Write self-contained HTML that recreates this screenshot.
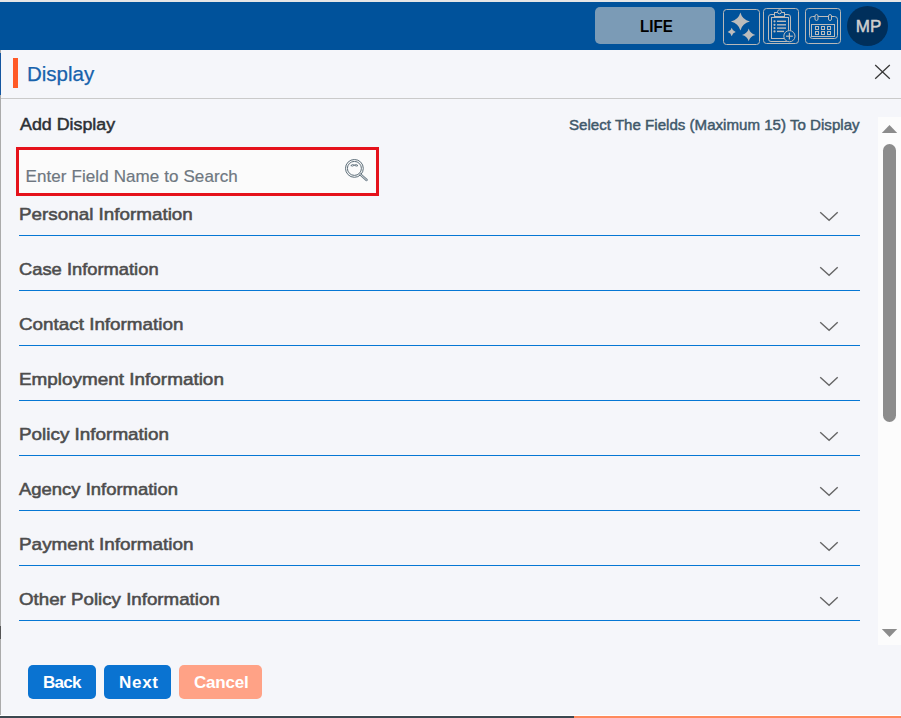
<!DOCTYPE html>
<html><head><meta charset="utf-8">
<style>
html,body{margin:0;padding:0;}
body{width:901px;height:718px;overflow:hidden;position:relative;background:#f5f6fa;font-family:"Liberation Sans",sans-serif;}
.a{position:absolute;}
.t{position:absolute;white-space:nowrap;}
#top{left:0;top:0;width:901px;height:2px;background:#e6e6e6;}
#hdr{left:0;top:2px;width:901px;height:48px;background:#00529b;}
#life{left:595px;top:7px;width:120px;height:37px;border-radius:5px;background:#7b9bb6;}
.ib{position:absolute;box-sizing:border-box;border:1px solid #b8b8b8;border-radius:4px;}
#av{left:847px;top:6px;width:41px;height:40px;border-radius:50%;background:#002f5b;}
#strip{left:0;top:50px;width:1px;height:666px;background:#ababab;}
#modal{left:1px;top:50px;width:900px;height:665px;background:#f5f6fa;border-radius:4px 4px 0 0;}
#bar{left:13px;top:58px;width:5px;height:30px;background:#ff5a27;}
#div1{left:1px;top:98px;width:900px;height:1px;background:#cacaca;}
#search{left:16px;top:147px;width:363px;height:49px;box-sizing:border-box;border:3px solid #e5121b;background:#fbfbfb;}
.line{position:absolute;left:19px;width:841px;height:1px;background:#0677d4;}
.lbl{position:absolute;left:19px;font-size:17px;line-height:17px;color:#4d4d4d;-webkit-text-stroke:0.55px #4d4d4d;transform-origin:0 0;}
.btn{position:absolute;top:665px;height:34px;border-radius:5px;background:#0a73d1;color:#fff;font-weight:bold;font-size:17px;line-height:34px;text-align:center;}
#track{left:878px;top:117px;width:23px;height:528px;background:#fcfcfc;}
#thumb{left:883px;top:144px;width:13px;height:278px;border-radius:7px;background:#8c8c8c;}
</style></head>
<body>
<div id="top" class="a"></div>
<div id="hdr" class="a"></div>
<div id="life" class="a"><div class="t" style="left:45px;top:11px;font-weight:bold;font-size:17px;line-height:17px;color:#000;transform-origin:0 0;transform:scaleX(0.89);">LIFE</div></div>

<!-- sparkle -->
<div class="ib" style="left:723px;top:9px;width:37px;height:36px;border-radius:3.5px;"></div>
<svg class="a" style="left:723px;top:9px;" width="37" height="36" viewBox="0 0 37 36">
  <path d="M17.40 3.40 Q19.30 10.60 26.90 12.40 Q19.30 14.20 17.40 21.40 Q15.50 14.20 7.90 12.40 Q15.50 10.60 17.40 3.40Z" fill="#bcbcbc"/>
  <path d="M8.70 18.80 Q9.50 22.16 12.70 23.00 Q9.50 23.84 8.70 27.20 Q7.90 23.84 4.70 23.00 Q7.90 22.16 8.70 18.80Z" fill="#bcbcbc"/>
  <path d="M25.70 19.60 Q27.04 24.64 32.40 25.90 Q27.04 27.16 25.70 32.20 Q24.36 27.16 19.00 25.90 Q24.36 24.64 25.70 19.60Z" fill="#bcbcbc"/>
</svg>
<!-- clipboard -->
<div class="ib" style="left:763px;top:8px;width:36px;height:36px;border-radius:3.5px;"></div>
<svg class="a" style="left:763px;top:8px;" width="36" height="36" viewBox="0 0 36 36" fill="none" stroke="#bcbcbc" stroke-width="1">
  <rect x="5.5" y="6.5" width="22" height="27" rx="2.5"/>
  <rect x="8.5" y="9.5" width="17" height="21"/>
  <rect x="11.5" y="4.5" width="10" height="4" fill="#00529b"/>
  <circle cx="16.5" cy="3.8" r="2" fill="#00529b"/>
  <g stroke-width="1.4"><line x1="14" y1="13.3" x2="23" y2="13.3"/><line x1="14" y1="16.8" x2="23" y2="16.8"/><line x1="14" y1="20.1" x2="23" y2="20.1"/><line x1="14" y1="23.4" x2="21" y2="23.4"/></g>
  <g fill="#bcbcbc" stroke="none"><circle cx="11.5" cy="13.3" r="1.1"/><circle cx="11.5" cy="16.8" r="1.1"/><circle cx="11.5" cy="20.1" r="1.1"/><circle cx="11.5" cy="23.4" r="1.1"/></g>
  <circle cx="26.4" cy="28.2" r="5.6" fill="#00529b"/>
  <line x1="26.4" y1="24.8" x2="26.4" y2="31.6" stroke-width="1.2"/><line x1="23" y1="28.2" x2="29.8" y2="28.2" stroke-width="1.2"/>
</svg>
<!-- calendar -->
<div class="ib" style="left:805px;top:8px;width:36px;height:36px;border-radius:3.5px;"></div>
<svg class="a" style="left:805px;top:8px;" width="36" height="36" viewBox="0 0 36 36" fill="none" stroke="#bcbcbc" stroke-width="1">
  <rect x="4.5" y="8.5" width="28" height="22" rx="3"/>
  <rect x="6.5" y="16.5" width="23" height="12"/>
  <rect x="10" y="6.5" width="3" height="6" rx="1.5" fill="#00529b"/>
  <rect x="23.5" y="6.5" width="3" height="6" rx="1.5" fill="#00529b"/>
  <g><rect x="10.5" y="18.5" width="3" height="3"/><rect x="16.5" y="18.5" width="3" height="3"/><rect x="22.5" y="18.5" width="3" height="3"/>
  <rect x="10.5" y="23.5" width="3" height="3"/><rect x="16.5" y="23.5" width="3" height="3"/><rect x="22.5" y="23.5" width="3" height="3"/></g>
</svg>
<div id="av" class="a"><div class="t" style="left:1px;width:41px;text-align:center;top:12px;font-size:17px;line-height:17px;color:#cfcfcf;-webkit-text-stroke:0.5px #cfcfcf;">MP</div></div>

<div id="strip" class="a"></div>
<div class="a" style="left:0;top:53px;width:1px;height:42px;background:#1456a0;"></div>
<div class="a" style="left:0;top:626px;width:1px;height:13px;background:#555;"></div>
<div id="modal" class="a"></div>
<div class="a" style="left:0;top:715px;width:901px;height:1px;background:#ffffff;"></div>
<div class="a" style="left:0;top:716px;width:574px;height:2px;background:#3b4850;"></div>
<div class="a" style="left:574px;top:716px;width:327px;height:2px;background:#ff8a5d;"></div>

<div id="bar" class="a"></div>
<div class="t" style="left:27px;top:64px;font-size:20.5px;line-height:20.5px;color:#1762ac;-webkit-text-stroke:0.25px #1762ac;">Display</div>
<svg class="a" style="left:870px;top:60px;" width="25" height="25" viewBox="0 0 25 25"><path d="M5.2 5 L19.8 18.8 M19.8 5 L5.2 18.8" stroke="#383838" stroke-width="1.25"/></svg>
<div id="div1" class="a"></div>

<div class="t" style="left:20px;top:116px;font-size:17.4px;line-height:17.4px;letter-spacing:0px;color:#2c3035;-webkit-text-stroke:0.5px #2c3035;transform-origin:0 0;transform:scaleX(1.025);">Add Display</div>
<div class="t" style="left:568.5px;top:117.5px;font-size:14.6px;line-height:14.6px;color:#40586a;-webkit-text-stroke:0.45px #40586a;transform-origin:0 0;transform:scaleX(1.0345);">Select The Fields (Maximum 15) To Display</div>

<div id="search" class="a"></div>
<div class="t" style="left:25.5px;top:168px;font-size:17px;line-height:17px;letter-spacing:0.1px;color:#6e7780;-webkit-text-stroke:0.2px #6e7780;">Enter Field Name to Search</div>
<svg class="a" style="left:340px;top:154px;" width="30" height="30" viewBox="0 0 30 30" fill="none" stroke="#5d6e79">
  <circle cx="14.4" cy="14.4" r="8.9" stroke-width="1"/>
  <circle cx="14.4" cy="14.4" r="7" stroke-width="1"/>
  <path d="M10.8 11.6 Q12.6 9.6 14.4 11.2 Q16.2 9.6 18 11.6 Q16.2 12.8 14.4 11.2 Q12.6 12.8 10.8 11.6Z" stroke-width="0.9"/>
  <path d="M20.6 20.6 L26.6 26" stroke="#6f7f8a" stroke-width="2.4" stroke-linecap="round"/>
  <path d="M20.6 20.6 L26.6 26" stroke="#fbfbfb" stroke-width="0.7" stroke-linecap="round"/>
</svg>

<div class="lbl" style="top:205.5px;transform:scaleX(1.1078);">Personal Information</div>
<div class="line" style="top:235px;"></div>
<div class="lbl" style="top:260.5px;transform:scaleX(1.0782);">Case Information</div>
<div class="line" style="top:290px;"></div>
<div class="lbl" style="top:315.5px;transform:scaleX(1.1081);">Contact Information</div>
<div class="line" style="top:345px;"></div>
<div class="lbl" style="top:370.5px;transform:scaleX(1.1121);">Employment Information</div>
<div class="line" style="top:400px;"></div>
<div class="lbl" style="top:425.5px;transform:scaleX(1.1106);">Policy Information</div>
<div class="line" style="top:455px;"></div>
<div class="lbl" style="top:480.5px;transform:scaleX(1.0850);">Agency Information</div>
<div class="line" style="top:510px;"></div>
<div class="lbl" style="top:535.5px;transform:scaleX(1.1130);">Payment Information</div>
<div class="line" style="top:565px;"></div>
<div class="lbl" style="top:590.5px;transform:scaleX(1.1011);">Other Policy Information</div>
<div class="line" style="top:620px;"></div>

<svg class="a" style="left:810px;top:200px;" width="40" height="420" viewBox="0 0 40 420" fill="none" stroke="#666" stroke-width="1.4">
  <path d="M10.2 12.3 L19.1 20.3 L27.7 12.3"/>
  <path d="M10.2 67.3 L19.1 75.3 L27.7 67.3"/>
  <path d="M10.2 122.3 L19.1 130.3 L27.7 122.3"/>
  <path d="M10.2 177.3 L19.1 185.3 L27.7 177.3"/>
  <path d="M10.2 232.3 L19.1 240.3 L27.7 232.3"/>
  <path d="M10.2 287.3 L19.1 295.3 L27.7 287.3"/>
  <path d="M10.2 342.3 L19.1 350.3 L27.7 342.3"/>
  <path d="M10.2 397.3 L19.1 405.3 L27.7 397.3"/>
</svg>

<div id="track" class="a"></div>
<svg class="a" style="left:878px;top:117px;" width="23" height="528" viewBox="0 0 23 528">
  <path d="M3.8 16 L11.5 8 L19.2 16Z" fill="#8c8c8c"/>
  <path d="M3.8 512 L11.5 520 L19.2 512Z" fill="#8c8c8c"/>
</svg>
<div id="thumb" class="a"></div>

<div class="btn" style="left:28px;width:68px;"><span class="t" style="left:15px;top:1px;letter-spacing:-0.7px;">Back</span></div>
<div class="btn" style="left:104px;width:67px;"><span class="t" style="left:15px;top:1px;letter-spacing:0.7px;">Next</span></div>
<div class="btn" style="left:179px;width:83px;background:#ffa286;"><span class="t" style="left:15px;top:1px;letter-spacing:-0.2px;">Cancel</span></div>
</body></html>
